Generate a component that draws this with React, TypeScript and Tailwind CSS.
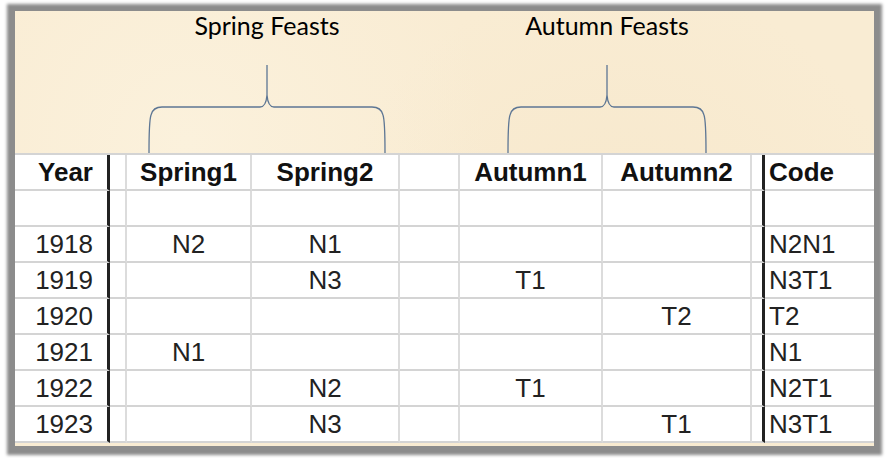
import React from 'react';

type Row = {
    year: string;
    spring1?: string;
    spring2?: string;
    autumn1?: string;
    autumn2?: string;
    code: string;
};

const rows: Row[] = [
    { year: '1918', spring1: 'N2', spring2: 'N1', code: 'N2N1' },
    { year: '1919', spring2: 'N3', autumn1: 'T1', code: 'N3T1' },
    { year: '1920', autumn2: 'T2', code: 'T2' },
    { year: '1921', spring1: 'N1', code: 'N1' },
    { year: '1922', spring2: 'N2', autumn1: 'T1', code: 'N2T1' },
    { year: '1923', spring2: 'N3', autumn2: 'T1', code: 'N3T1' },
];

const cols = 'grid grid-cols-[95px_17px_125px_148px_60px_143px_149px_13px_109px]';
const cell = 'h-[36px] flex items-center border-b-2 border-[#d4d4d4]';
const grid = 'border-r-2 border-r-[#dcdcdc]';

// curly brace drawn under each feast title
function Brace({ width }: { width: number }) {
    const c = width / 2;
    const w = width - 1;
    return (
        <svg width={width} height={88} className="block">
            <path
                d={`M1 88 C1 70 1 56 3 50 Q5 42 14 42 L${c - 7} 42 Q${c - 1} 42 ${c} 30 L${c} 0 M${c} 30 Q${c + 1} 42 ${c + 7} 42 L${w - 13} 42 Q${w - 4} 42 ${w - 2} 50 C${w} 56 ${w} 70 ${w} 88`}
                fill="none"
                stroke="#5d7694"
                strokeWidth={1.3}
            />
        </svg>
    );
}

function Group({ title, width, offset }: { title: string; width: number; offset: string }) {
    return (
        <div className={`flex flex-col items-center ${offset}`} style={{ width }}>
            <div className="text-[25px] leading-[28px] text-black font-['Lato',sans-serif] whitespace-nowrap">
                {title}
            </div>
            <div className="mt-[26px]">
                <Brace width={width} />
            </div>
        </div>
    );
}

export default function App() {
    return (
        <div className="w-[890px] h-[458px] bg-white pl-[15px] pt-[11px] overflow-hidden">
            <div className="w-[859px] h-[435px] bg-[#f9ecd3] bg-[radial-gradient(circle_at_20%_30%,#fbf1dc_0%,transparent_40%),radial-gradient(circle_at_70%_60%,#f7e8cc_0%,transparent_45%)] shadow-[0_1px_3px_8px_#8c8c8c] font-['Liberation_Sans',Arial,sans-serif]">
                <div className={`${cols} h-[142px]`}>
                    <div className="col-start-3 col-span-2">
                        <Group title="Spring Feasts" width={238} offset="ml-[21px]" />
                    </div>
                    <div className="col-start-6 col-span-2">
                        <Group title="Autumn Feasts" width={200} offset="ml-[47px]" />
                    </div>
                </div>

                <div className={`${cols} bg-white border-t-2 border-[#d4d4d4] text-[26px] text-[#222]`}>
                    {/* header row */}
                    <div className={`${cell} justify-end pr-[14px] font-bold text-[#111] border-r-[3px] border-r-[#222]`}>Year</div>
                    <div className={`${cell} ${grid}`} />
                    <div className={`${cell} ${grid} justify-center font-bold text-[#111]`}>Spring1</div>
                    <div className={`${cell} ${grid} justify-center font-bold text-[#111]`}>Spring2</div>
                    <div className={`${cell} ${grid}`} />
                    <div className={`${cell} ${grid} justify-center font-bold text-[#111]`}>Autumn1</div>
                    <div className={`${cell} ${grid} justify-center font-bold text-[#111]`}>Autumn2</div>
                    <div className={`${cell} border-r-[3px] border-r-[#222]`} />
                    <div className={`${cell} pl-[4px] font-bold text-[#111]`}>Code</div>

                    {/* empty spacer row */}
                    <div className={`${cell} border-r-[3px] border-r-[#222]`} />
                    <div className={`${cell} ${grid}`} />
                    <div className={`${cell} ${grid}`} />
                    <div className={`${cell} ${grid}`} />
                    <div className={`${cell} ${grid}`} />
                    <div className={`${cell} ${grid}`} />
                    <div className={`${cell} ${grid}`} />
                    <div className={`${cell} border-r-[3px] border-r-[#222]`} />
                    <div className={cell} />

                    {rows.map((r, i) => {
                        const last = i === rows.length - 1 ? 'border-b-0' : '';
                        return (
                            <React.Fragment key={r.year}>
                                <div className={`${cell} ${last} justify-end pr-[14px] border-r-[3px] border-r-[#222]`}>{r.year}</div>
                                <div className={`${cell} ${last} ${grid}`} />
                                <div className={`${cell} ${last} ${grid} justify-center`}>{r.spring1}</div>
                                <div className={`${cell} ${last} ${grid} justify-center`}>{r.spring2}</div>
                                <div className={`${cell} ${last} ${grid}`} />
                                <div className={`${cell} ${last} ${grid} justify-center`}>{r.autumn1}</div>
                                <div className={`${cell} ${last} ${grid} justify-center`}>{r.autumn2}</div>
                                <div className={`${cell} ${last} border-r-[3px] border-r-[#222]`} />
                                <div className={`${cell} ${last} pl-[4px]`}>{r.code}</div>
                            </React.Fragment>
                        );
                    })}
                </div>
            </div>
        </div>
    );
}
